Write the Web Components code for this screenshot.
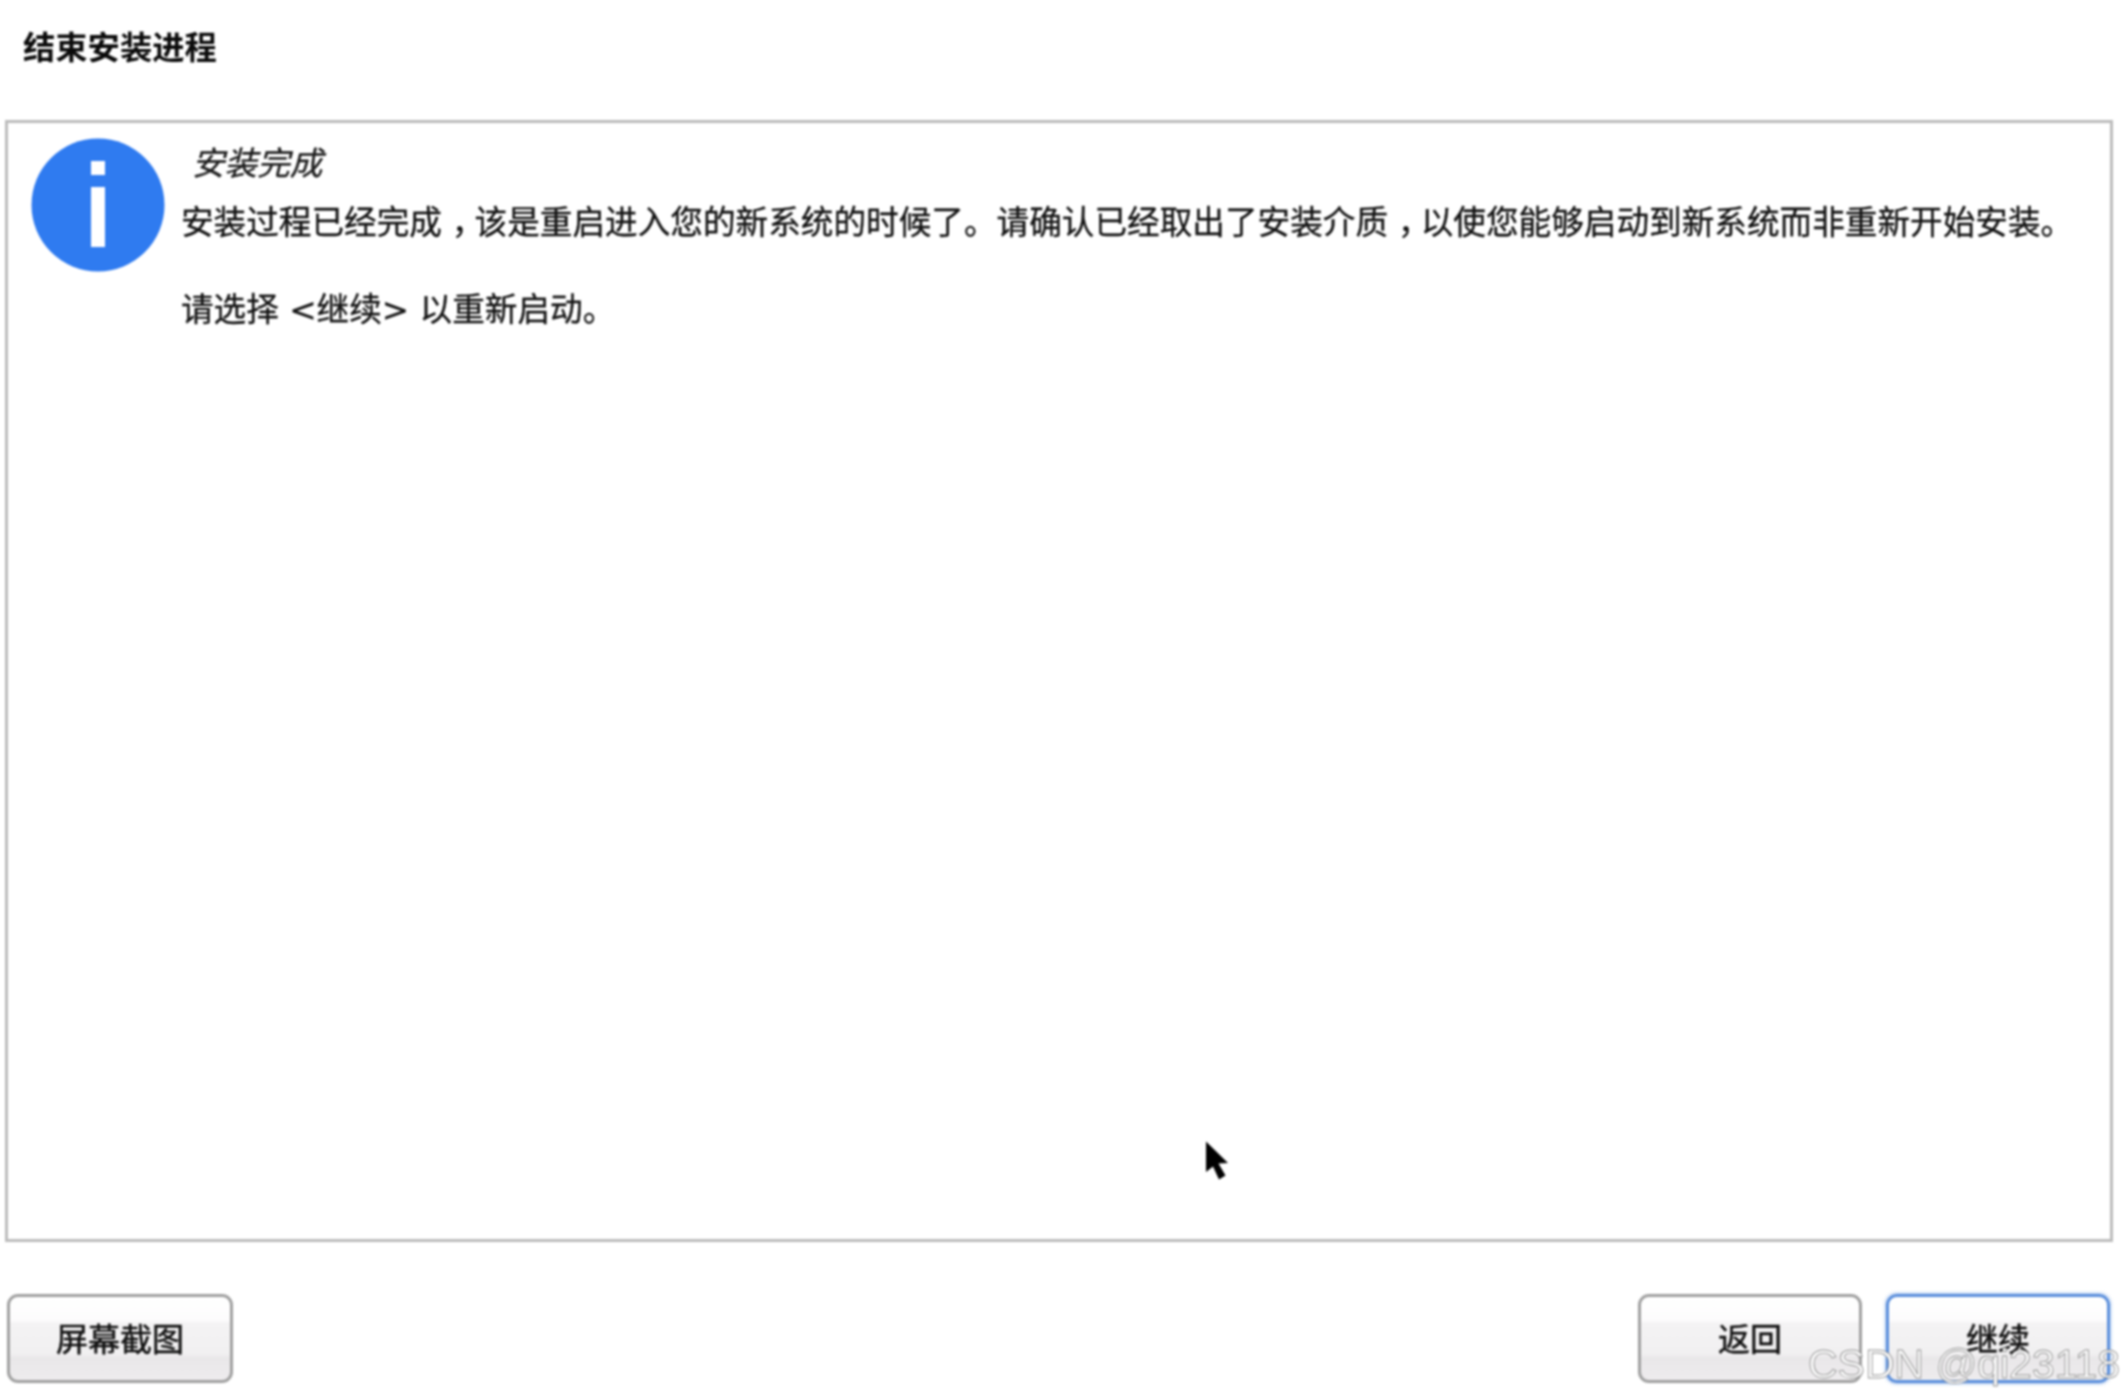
<!DOCTYPE html>
<html lang="zh"><head><meta charset="utf-8"><title>结束安装进程</title>
<style>
html,body{margin:0;padding:0;background:#fff}
body{font-family:"DejaVu Sans","Noto Sans CJK SC",sans-serif;color:#111}
.cm{font-feature-settings:"halt";padding:0 .2em 0 .3em}
</style></head><body>
<installer-app>
  <step-title slot="title">结束安装进程</step-title>
  <info-panel slot="panel" heading="安装完成">
    <p>安装过程已经完成<span class="cm">，</span>该是重启进入您的新系统的时候了。请确认已经取出了安装介质<span class="cm">，</span>以使您能够启动到新系统而非重新开始安装。</p>
    <p>请选择 &lt;继续&gt; 以重新启动。</p>
  </info-panel>
  <wizard-button slot="left" wide>屏幕截图</wizard-button>
  <wizard-button slot="right">返回</wizard-button>
  <wizard-button slot="right" focused>继续</wizard-button>
</installer-app>
<script>
function def(name,html,init){
  customElements.define(name,class extends HTMLElement{
    constructor(){super();this.attachShadow({mode:'open'}).innerHTML=html;}
    connectedCallback(){if(init)init(this)}
  });
}
def('installer-app',`<style>
:host{display:flex;flex-direction:column;position:relative;width:2123px;height:1400px;overflow:hidden;box-sizing:border-box;filter:blur(.9px)}
.title{height:120px;flex:none;display:flex;align-items:flex-start}
.panel{flex:none;height:1122px;margin:0 10px 0 5px;display:flex}
.foot{flex:none;display:flex;justify-content:space-between;margin-top:52px;padding:0 13px 0 7px}
.r{display:flex;gap:24px}
.cursor{position:absolute;left:1200px;top:1136px}
.wm{position:absolute;left:1808px;top:1340px;font:41px/48px "Liberation Sans",sans-serif;color:#fff;-webkit-text-stroke:.9px rgba(120,120,120,.8);white-space:nowrap}
</style>
<div class="title"><slot name="title"></slot></div>
<div class="panel"><slot name="panel"></slot></div>
<div class="foot"><slot name="left"></slot><div class="r"><slot name="right"></slot></div></div>
<svg class="cursor" width="32" height="50" viewBox="1200 1136 32 50"><path d="M1206 1141.5V1172L1213 1166.5L1219 1179.5L1225.500 1175.500L1218.500 1163.500L1228 1163Z" fill="#000"/></svg>
<div class="wm">CSDN @qi23118</div>`);
def('step-title',`<style>:host{display:block;font-weight:700;font-size:32.3px;line-height:44px;padding:26px 0 0 23px;color:#0a0a0a}</style><slot></slot>`);
def('info-icon',`<style>:host{display:block;width:134px;height:134px}svg{display:block}</style>
<svg width="134" height="134" viewBox="0 0 134 134"><circle cx="67" cy="67" r="66.500" fill="#2f7bf0"/><rect x="60" y="23" width="14" height="14" fill="#fff"/><rect x="60" y="49" width="14" height="60" fill="#fff"/></svg>`);
def('info-panel',`<style>
:host{display:flex;flex:1;box-sizing:border-box;border:3px solid #bcbcbc;background:#fff;padding:15px 0 0 23px;gap:16px;font-size:32.64px;color:#111;-webkit-text-stroke:.3px #111}
.c{flex:1;min-width:0}
.h{font-style:italic;line-height:44px;margin:4px 0 15px 11px;color:#1a1a1a}
::slotted(p){margin:0 0 43px;line-height:44px;white-space:nowrap}
</style><info-icon></info-icon><div class="c"><div class="h"></div><slot></slot></div>`,
el=>{el.shadowRoot.querySelector('.h').textContent=el.getAttribute('heading')});
def('wizard-button',`<style>
:host{display:flex;align-items:center;justify-content:center;box-sizing:border-box;width:224px;height:89px;border:3px solid #a0a0a0;border-radius:11px;font-size:32px;color:#111;-webkit-text-stroke:.5px #111;
background:linear-gradient(#fff 0%,#fdfcfd 28%,#f4f3f4 32%,#f1f0f1 68%,#e9e7e9 74%,#eeecee 100%);padding-bottom:3px}
:host([wide]){width:226px}
:host([focused]){border-color:#5b8fdc;box-shadow:0 0 3px 1px rgba(91,143,220,.55)}
</style><slot></slot>`);
</script>
</body></html>
